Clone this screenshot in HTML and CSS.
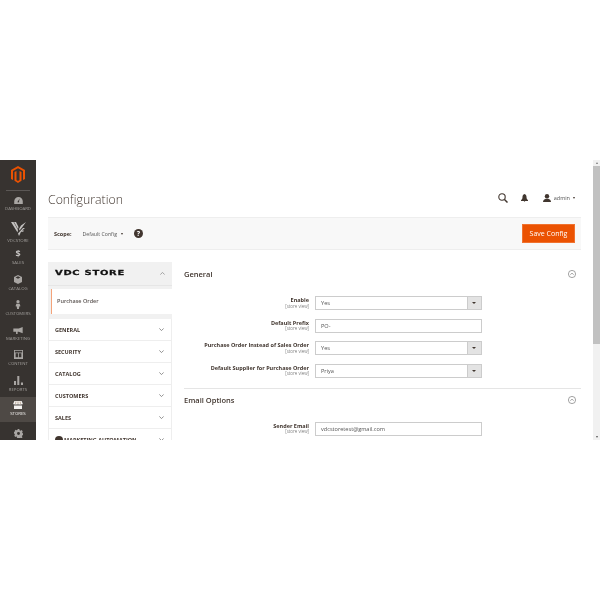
FILE: index.html
```html
<!DOCTYPE html>
<html lang="en">
<head>
<meta charset="utf-8">
<title>Configuration</title>
<link rel="stylesheet" href="styles.css">
</head>
<body>
<div class="app">
  <nav class="menu">
    <div class="logo">
      <svg width="14" height="17" viewBox="0 0 14 17"><path fill="#eb5202" d="M7 0 14 4v9l-2 1.100V5.100L7 2.300 2 5.100v9L0 13V4zM3.500 6 5.500 4.900V14l1.500.9 1.500-.9V4.900L10.500 6v8.800L7 17l-3.500-2.200z"/></svg>
    </div>
    <a class="item dash">
      <svg width="9" height="7" viewBox="0 0 11 9"><path fill="#a9a6a3" d="M5.500 0a5.500 5.500 0 0 1 5.500 5.500V9H0V5.500A5.500 5.500 0 0 1 5.500 0zm1.500 2L5 5a1 1 0 1 0 1.200.5z"/></svg>
      <span>DASHBOARD</span>
    </a>
    <a class="item vdc">
      <svg width="15" height="15" viewBox="0 0 15 15"><path fill="#c4c2c0" d="M0 1h2.500L7 9 6.500 11.500zM3 1h2l2.500 5L7 8zM15 1l-5 3.500L8 8l.5 1.500L11 6.500zM8.800 10.500 12 7h2l-3 2.500h2l-.8 1.200H10L9 13l-1 2-1-2.500z"/></svg>
      <span>VDCSTORE</span>
    </a>
    <a class="item sales"><b class="dollar">$</b><span>SALES</span></a>
    <a class="item catalog">
      <svg width="8" height="9" viewBox="0 0 10 11"><path fill="#a9a6a3" d="M5 0l5 2.500v6L5 11 0 8.500v-6zM5 1.500 2 3l3 1.500L8 3z"/></svg>
      <span>CATALOG</span>
    </a>
    <a class="item">
      <svg width="6" height="9" viewBox="0 0 7 11"><circle cx="3.500" cy="2" r="2" fill="#a9a6a3"/><path fill="#a9a6a3" d="M1.500 4.500h4l1 3-1.500.5-.3 3H2.300L2 8 .5 7.500z"/></svg>
      <span>CUSTOMERS</span>
    </a>
    <a class="item">
      <svg width="10" height="7" viewBox="0 0 12 9"><path fill="#a9a6a3" d="M12 0v8L7 6.200H5.500V9H3.500V6.200H0V2h7z"/></svg>
      <span>MARKETING</span>
    </a>
    <a class="item">
      <svg width="9" height="9" viewBox="0 0 11 11"><path fill="#a9a6a3" d="M0 0h11v11H0zm1 1v2h9V1zm1 3v5h3V4zm4 0v5h3V4z"/></svg>
      <span>CONTENT</span>
    </a>
    <a class="item">
      <svg width="9" height="9" viewBox="0 0 11 11"><path fill="#a9a6a3" d="M0 6h2.500v5H0zM4 0h2.500v11H4zM8.500 8H11v3H8.500z"/></svg>
      <span>REPORTS</span>
    </a>
    <a class="item active">
      <svg width="10" height="8" viewBox="0 0 12 10"><path fill="#f4f2f0" d="M1.500 0h9L12 3.500c0 1-2 1.200-2 .2 0 1-3 1-3 0 0 1-2 1-2 0 0 1-3 1-3 0C2 4.700 0 4.500 0 3.500zM1 5.500h10V10H1z"/><path fill="#a9907a" d="M3 .5h1L3.500 3.500h-1zM5.500.5h1v3h-1zM8 .5h1l.5 3h-1z"/></svg>
      <span>STORES</span>
    </a>
    <a class="item">
      <svg width="9" height="9" viewBox="0 0 11 11"><path fill="#a9a6a3" fill-rule="evenodd" d="M4.500 0h2l.3 1.500 1.200.5 1.300-.8 1.400 1.400-.8 1.300.5 1.200 1.100.3v2l-1.400.3-.5 1.200.8 1.300-1.400 1.400-1.300-.8-1.200.5-.3 1.100h-2l-.3-1.400L3 8.900l-1.300.8L.3 8.300l.8-1.300L.6 5.800 0 5.500v-2l1.100-.3.5-1.200L.8 1.700 1.700.8 3 1.600l1.200-.5zM5.500 3.700a1.800 1.800 0 1 0 0 3.600 1.800 1.800 0 0 0 0-3.600z"/></svg>
      <span>SYSTEM</span>
    </a>
  </nav>

  <main class="page">
    <header class="titlebar">
      <h1>Configuration</h1>
      <div class="actions">
        <svg class="search" width="10" height="10" viewBox="0 0 10 10"><circle cx="4" cy="4" r="3.200" fill="none" stroke="#41362f" stroke-width="1.100"/><path d="M6.500 6.500 9.500 9.500" stroke="#41362f" stroke-width="1.500"/></svg>
        <svg class="bell" width="7" height="8" viewBox="0 0 7 8"><path fill="#41362f" d="M3.500 0C5 .5 5.500 1.500 5.500 3c0 1.500.5 2.500 1.500 3.200V7H0v-.8C1 5.500 1.500 4.500 1.500 3 1.500 1.500 2 .5 3.500 0zM2.700 7.300h1.600L3.500 8z"/></svg>
        <span class="user">
          <svg width="8" height="8" viewBox="0 0 8 8"><circle cx="4" cy="2.200" r="2.200" fill="#41362f"/><path fill="#41362f" d="M0 8c0-2 1.500-2.800 2.800-3.200h2.400C6.500 5.200 8 6 8 8z"/></svg>
          <span>admin</span>
          <i class="caret"></i>
        </span>
      </div>
    </header>

    <div class="scopebar">
      <div class="scope">
        <strong>Scope:</strong>
        <span class="scope-value">Default Config</span>
        <i class="caret"></i>
        <span class="help">?</span>
      </div>
      <button class="save" type="button">Save Config</button>
    </div>

    <div class="columns">
      <aside class="tabs">
        <div class="tab-head">
          <span class="brand">VDC STORE</span>
          <svg class="chev" width="5" height="3" viewBox="0 0 7 4"><path d="M.5 3.500 3.500.5l3 3" fill="none" stroke="#777" stroke-width=".9"/></svg>
        </div>
        <div class="tab-sub"><a>Purchase Order</a></div>
        <ul class="tab-list">
          <li>GENERAL<svg class="chev" width="5" height="3" viewBox="0 0 7 4"><path d="M.5.5l3 3 3-3" fill="none" stroke="#555" stroke-width=".9"/></svg></li>
          <li>SECURITY<svg class="chev" width="5" height="3" viewBox="0 0 7 4"><path d="M.5.5l3 3 3-3" fill="none" stroke="#555" stroke-width=".9"/></svg></li>
          <li>CATALOG<svg class="chev" width="5" height="3" viewBox="0 0 7 4"><path d="M.5.5l3 3 3-3" fill="none" stroke="#555" stroke-width=".9"/></svg></li>
          <li>CUSTOMERS<svg class="chev" width="5" height="3" viewBox="0 0 7 4"><path d="M.5.5l3 3 3-3" fill="none" stroke="#555" stroke-width=".9"/></svg></li>
          <li>SALES<svg class="chev" width="5" height="3" viewBox="0 0 7 4"><path d="M.5.5l3 3 3-3" fill="none" stroke="#555" stroke-width=".9"/></svg></li>
          <li><span class="mk"><svg width="8" height="8" viewBox="0 0 8 8"><circle cx="4" cy="4" r="4" fill="#41362f"/></svg>MARKETING AUTOMATION</span><svg class="chev" width="5" height="3" viewBox="0 0 7 4"><path d="M.5.5l3 3 3-3" fill="none" stroke="#555" stroke-width=".9"/></svg></li>
        </ul>
      </aside>

      <section class="form">
        <div class="section-head">
          <h2>General</h2>
          <svg width="8" height="8" viewBox="0 0 8 8"><circle cx="4" cy="4" r="3.600" fill="none" stroke="#666" stroke-width=".6"/><path d="M2.300 4.600 4 3.200l1.700 1.400" fill="none" stroke="#666" stroke-width=".6"/></svg>
        </div>
        <div class="rows">
          <div class="row">
            <label>Enable<small>[store view]</small></label>
            <div class="select"><span>Yes</span><i class="arrow"></i></div>
          </div>
          <div class="row">
            <label>Default Prefix<small>[store view]</small></label>
            <div class="input">PO-</div>
          </div>
          <div class="row">
            <label>Purchase Order Instead of Sales Order<small>[store view]</small></label>
            <div class="select"><span>Yes</span><i class="arrow"></i></div>
          </div>
          <div class="row">
            <label>Default Supplier for Purchase Order<small>[store view]</small></label>
            <div class="select"><span>Priya</span><i class="arrow"></i></div>
          </div>
        </div>
        <div class="section-head second">
          <h2>Email Options</h2>
          <svg width="8" height="8" viewBox="0 0 8 8"><circle cx="4" cy="4" r="3.600" fill="none" stroke="#666" stroke-width=".6"/><path d="M2.300 4.600 4 3.200l1.700 1.400" fill="none" stroke="#666" stroke-width=".6"/></svg>
        </div>
        <div class="rows">
          <div class="row">
            <label>Sender Email<small>[store view]</small></label>
            <div class="input">vdcstoretest@gmail.com</div>
          </div>
        </div>
      </section>
    </div>
  </main>

  <div class="scrollbar">
    <i class="sb-up"></i>
    <div class="sb-track"><div class="sb-thumb"></div></div>
    <i class="sb-down"></i>
  </div>
</div>
</body>
</html>
```
FILE: styles.css
```css
* { box-sizing: border-box; }
html, body { margin: 0; padding: 0; background: #fff; overflow: hidden; }
body { height: 600px; padding-top: 160px; font-family: "Open Sans", "Liberation Sans", sans-serif; color: #41362f; }
.app { display: flex; height: 280px; overflow: hidden; background: #fff; filter: blur(.3px); }

.menu { flex: 0 0 36px; background: #373330; display: flex; flex-direction: column; align-items: stretch; overflow: hidden; }
.logo { height: 31px; margin: 0 6px; padding-top: 6px; display: flex; justify-content: center; border-bottom: 1px solid #5b5755; flex: none; }
.item { flex: none; height: 25.300px; display: flex; flex-direction: column; align-items: center; justify-content: flex-end; gap: 2px; padding-bottom: 2px; }
.item span { font-size: 4.300px; line-height: 5px; color: #a19e9b; white-space: nowrap; }
.item.dash { height: 21.500px; }
.item.vdc { height: 32px; }
.item.sales { height: 22px; }
.item.catalog { height: 26px; }
.item.active { background: #4e4945; margin-top: 3.300px; height: 25px; padding-bottom: 5.500px; }
.item.active span { color: #f4f2f0; }
.dollar { font-size: 9px; line-height: 9px; color: #c4c1bf; font-weight: 700; }

.page { flex: 1 1 auto; min-width: 0; padding: 0 12px; }
.titlebar { height: 57px; display: flex; justify-content: space-between; align-items: flex-start; padding-top: 31px; }
h1 { margin: 0; font-size: 12.300px; line-height: 18px; font-weight: 300; color: #41362f; }
.actions { display: flex; align-items: center; padding: 2px 6px 0 0; font-size: 5.500px; }
.search { margin-right: 13px; }
.bell { margin-right: 15px; }
.user { display: flex; align-items: center; gap: 3px; color: #555; }
.caret { display: inline-block; width: 0; height: 0; border: 1.500px solid transparent; border-top: 2px solid #41362f; border-bottom: 0; }

.scopebar { height: 33px; display: flex; justify-content: space-between; align-items: center; background: #f8f8f8; border-top: 1px solid #eee; border-bottom: 1px solid #eee; padding: 0 6px; }
.scope { display: flex; align-items: center; font-size: 5.500px; color: #555; }
.scope strong { font-weight: 700; color: #41362f; margin-right: 11px; }
.scope-value { margin-right: 4px; font-size: 5.200px; }
.help { margin-left: 11px; width: 9px; height: 9px; border-radius: 50%; background: #41362f; color: #fff; font-size: 7px; font-weight: 700; line-height: 9px; text-align: center; }
.save { width: 53px; height: 19px; padding: 0; background: #eb5202; border: 1px solid #f0722f; color: #fff; font: 400 7px "Open Sans", sans-serif; }

.columns { display: flex; gap: 12px; padding-top: 12px; align-items: flex-start; }
.tabs { flex: 0 0 124px; }
.tab-head { height: 24px; background: #f1f1f1; border-bottom: 1px solid #e6e6e6; display: flex; align-items: center; justify-content: space-between; padding: 0 7px 1px; }
.brand { font: 700 7px "DejaVu Sans", sans-serif; color: #111; letter-spacing: .5px; transform-origin: left center; transform: scaleX(1.420); -webkit-text-stroke: .25px #111; }
.tab-sub { height: 33px; background: #f1f1f1; padding: 3px 0 5px 3px; }
.tab-sub a { display: block; height: 100%; background: #fff; border-left: 1px solid #f4a37a; font-size: 5.500px; font-weight: 600; line-height: 24px; padding-left: 5px; color: #5a5350; }
.tab-list { list-style: none; margin: 0; padding: 0; border-left: 1px solid #eee; border-right: 1px solid #eee; }
.tab-list li { height: 22px; display: flex; align-items: center; justify-content: space-between; padding: 0 7px 0 6px; border-bottom: 1px solid #eee; font-size: 5.500px; font-weight: 700; color: #41362f; white-space: nowrap; }
.mk { display: flex; align-items: center; gap: 1px; }

.form { flex: 1 1 auto; min-width: 0; }
.section-head { display: flex; justify-content: space-between; align-items: center; height: 23px; padding-right: 5px; }
h2 { margin: 0; font-size: 7.500px; font-weight: 600; color: #41362f; }
.section-head.second { border-top: 1px solid #e5e5e5; margin-top: 10px; height: 24px; margin-bottom: 10px; }
.rows { display: flex; flex-direction: column; gap: 8.500px; padding-top: 11px; }
.section-head.second + .rows { padding-top: 0; }
.row { display: flex; align-items: center; gap: 6px; height: 14px; }
label { flex: 0 0 125px; text-align: right; font-size: 5.500px; font-weight: 700; line-height: 6.500px; color: #41362f; white-space: nowrap; }
small { display: block; font-size: 4.400px; font-weight: 400; line-height: 5.500px; color: #858585; }
.select, .input { flex: 0 0 167px; height: 14px; border: 1px solid #ccc; background: #fff; font-size: 5.600px; line-height: 12px; padding-left: 5px; color: #555; display: flex; justify-content: space-between; }
.arrow { flex: 0 0 14px; background: #e3e3e3; border-left: 1px solid #ccc; position: relative; }
.arrow::after { content: ""; position: absolute; left: 4px; top: 5px; border: 2px solid transparent; border-top: 2px solid #41362f; border-bottom: 0; }

.scrollbar { flex: 0 0 7px; display: flex; flex-direction: column; background: #f1f1f1; padding-top: 1px; }
.sb-track { flex: 1 1 auto; }
.sb-thumb { height: 178px; background: #c1c1c1; }
.sb-up, .sb-down { flex: none; width: 0; height: 0; margin: 1px auto 2px; border: 1.500px solid transparent; }
.sb-up { border-bottom: 2px solid #777; border-top: 0; }
.sb-down { border-top: 2px solid #555; border-bottom: 0; }
```
